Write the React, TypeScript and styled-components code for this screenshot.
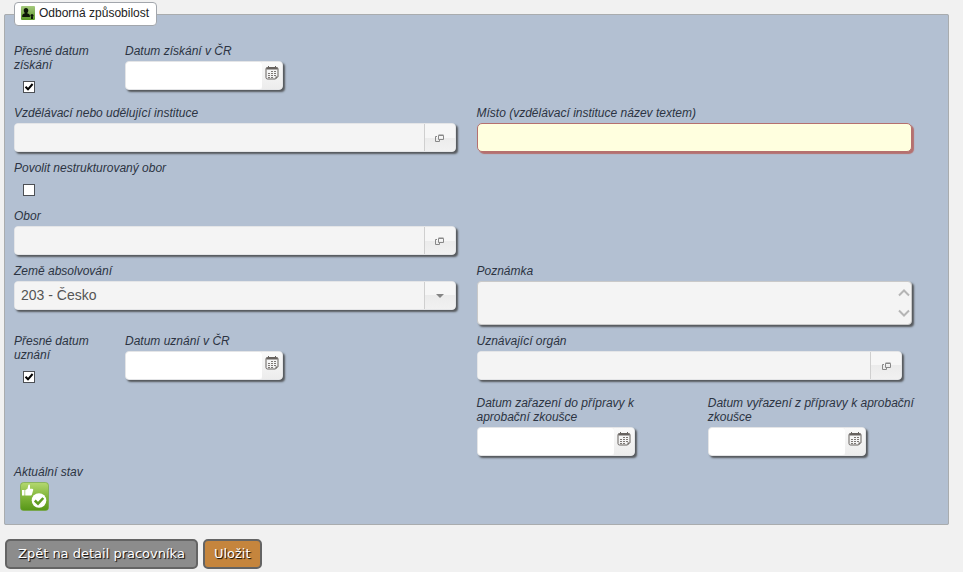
import React, { useId } from "react";
import styled, { createGlobalStyle, css } from "styled-components";

const GlobalStyle = createGlobalStyle`
  *, *::before, *::after { box-sizing: border-box; }
  body {
    margin: 0;
    background: #f1f1f1;
    font-family: "Liberation Sans", Arial, sans-serif;
    font-size: 12px;
    line-height: 14px;
    color: #2c3442;
  }
  button, input, select, textarea { font: inherit; color: inherit; }
`;

const Page = styled.form`
  padding: 2px 14px 0 4px;
`;

const Panel = styled.fieldset`
  margin: 0;
  min-width: 0;
  padding: 18px 9px 13px;
  border: 1px solid #a9acae;
  border-radius: 2px;
  background: #b3c0d2;
`;

const PanelTitle = styled.legend`
  display: flex;
  align-items: center;
  gap: 4px;
  height: 24px;
  padding: 0 7px 2px 6px;
  border: 1px solid #a2a6ac;
  border-radius: 4px;
  background: #fff;
  color: #222;
`;

const Rows = styled.div`
  display: flex;
  flex-direction: column;
  gap: 9px;
`;

const Row = styled.div`
  display: grid;
  grid-template-columns: 1fr 1fr;
`;

const Split = styled.div<{ $columns: string }>`
  display: grid;
  grid-template-columns: ${(p) => p.$columns};
`;

const Field = styled.div<{ $inset?: number }>`
  display: flex;
  flex-direction: column;
  align-items: flex-start;
  gap: 3px;
  min-width: 0;
  padding-right: ${(p) => p.$inset ?? 21}px;
`;

const DateCell = styled(Field)`
  padding-right: 20px;
`;

const Label = styled.label`
  font-style: italic;
`;

const CheckSlot = styled.div`
  display: flex;
  align-items: center;
  height: 22px;
  padding: 2px 0 0 9px;
`;

const CheckInput = styled.input`
  appearance: none;
  width: 12px;
  height: 12px;
  margin: 0;
  border: 1px solid #4c4f54;
  background: #fff;
  &:checked {
    background: #fff
      url("data:image/svg+xml,%3Csvg xmlns='http://www.w3.org/2000/svg' viewBox='0 0 10 10'%3E%3Cpath d='M1.5 4.8 4 7.3 8.6 2' fill='none' stroke='%23000' stroke-width='2'/%3E%3C/svg%3E")
      center / 10px 10px no-repeat;
  }
`;

const raised = css`
  border: 1px solid #e4e5e7;
  border-radius: 4px;
  box-shadow: 2px 2px 2px #55585c;
`;

const Combo = styled.div<{ $width?: string }>`
  ${raised}
  display: flex;
  width: ${(p) => p.$width ?? "100%"};
  height: 29px;
  overflow: hidden;
  background: #f4f4f4;
`;

const ComboInput = styled.input<{ $white?: boolean }>`
  flex: 1;
  min-width: 0;
  padding: 0 6px;
  border: 0;
  border-radius: ${(p) => (p.$white ? "3px" : "0")};
  background: ${(p) => (p.$white ? "#fff" : "#f4f4f4")};
  outline: none;
`;

const LookupButton = styled.button`
  display: flex;
  align-items: center;
  justify-content: center;
  width: 31px;
  padding: 0;
  border: 0;
  border-left: 1px solid #cfcfcf;
  background: linear-gradient(#f6f6f6 50%, #ebebeb 50%, #f1f1f1);
`;

const DateButton = styled.button`
  display: flex;
  justify-content: center;
  width: 20px;
  padding: 4px 0 0;
  border: 0;
  background: linear-gradient(#fafafa, #ececec);
`;

const SelectInput = styled.select`
  appearance: none;
  flex: 1;
  min-width: 0;
  padding: 0 6px 2px;
  border: 0;
  background: #f4f4f4;
  color: #555;
  font-size: 14px;
  line-height: 20px;
  outline: none;
`;

const RequiredInput = styled.input`
  width: 100%;
  height: 29px;
  padding: 0 6px;
  border: 1px solid #b5706f;
  border-radius: 5px;
  box-shadow: 2px 2px 1px #b5706f;
  background: #ffffdf;
  outline: none;
`;

const NoteBox = styled.div`
  ${raised}
  display: flex;
  width: 100%;
  height: 44px;
  background: #f4f4f4;
  border-color: #c9c9c9;
`;

const NoteInput = styled.textarea`
  flex: 1;
  min-width: 0;
  padding: 4px 6px;
  border: 0;
  background: transparent;
  resize: none;
  outline: none;
  scrollbar-width: none;
`;

const NoteArrows = styled.div`
  display: flex;
  flex-direction: column;
  justify-content: space-between;
  padding: 7px 1px 7px 2px;
`;

const StatusIcon = styled.div`
  display: flex;
  height: 29px;
  padding-left: 6px;
`;

const Actions = styled.div`
  display: flex;
  gap: 5px;
  padding: 14px 0 0 1px;
`;

const ActionButton = styled.button<{ $tone: string; $pad: number }>`
  height: 30px;
  padding: 0 ${(p) => p.$pad}px;
  border: 2px solid #646464;
  border-radius: 5px;
  background: ${(p) => p.$tone};
  color: #fff;
  font-family: "DejaVu Sans", Verdana, sans-serif;
  font-size: 13px;
  text-shadow: 1px 1px 1px #000;
`;

const PersonIcon = () => (
  <svg width="14" height="14" viewBox="0 0 14 14" aria-hidden="true">
    <defs>
      <linearGradient id="person-bg" x1="0" y1="0" x2="0" y2="1">
        <stop offset="0" stopColor="#a5c97d" />
        <stop offset="1" stopColor="#5c9a28" />
      </linearGradient>
    </defs>
    <rect width="14" height="14" rx="1" fill="url(#person-bg)" />
    <path
      d="M5 2c1.500 0 2.300 1 2.300 2.300 0 1-.4 1.900-.9 2.400v.8c1.400.5 2.500.9 2.500 2.200V11H1.200V9.700c0-1.300 1.100-1.700 2.400-2.200v-.8c-.5-.5-.9-1.400-.9-2.400C2.700 3 3.500 2 5 2z"
      fill="#0d1607"
    />
    <circle cx="11" cy="9.500" r="1.500" fill="#0d1607" />
    <path d="M10 11h2v2h-2z" fill="#0d1607" />
  </svg>
);

const CalendarIcon = () => (
  <svg width="14" height="14" viewBox="0 0 14 14" fill="none" stroke="#67625f" aria-hidden="true">
    <path d="M2.500 1.500h9a1.500 1.500 0 0 1 1.500 1.500v7.500l-2.500 2.500h-8A1.500 1.500 0 0 1 1 11.500V3a1.500 1.500 0 0 1 1.500-1.500z" />
    <path d="M1.500 2.500h11" strokeWidth="2" />
    <path d="M3.500 0v2M10.500 0v2" />
    <path d="M6 5.500h5M3 7.500h8M3 9.500h8M3 11.500h5" stroke="#7d7875" strokeDasharray="2 1" />
    <path d="M10.500 13v-2.500H13z" fill="#67625f" stroke="none" />
  </svg>
);

const WindowsIcon = () => (
  <svg width="9" height="8" viewBox="0 0 9 8" fill="none" stroke="#888" aria-hidden="true">
    <path d="M3.500 1.500h5v4h-5zM3.500 1h5" />
    <path d="M2 2.500H.5v5h4V6" />
  </svg>
);

const Triangle = () => (
  <svg width="8" height="4" viewBox="0 0 8 4" aria-hidden="true">
    <path d="M0 0h8L4 4z" fill="#858585" />
  </svg>
);

const Chevron = ({ d }: { d: string }) => (
  <svg width="12" height="8" viewBox="0 0 12 8" fill="none" stroke="#b5b5b5" strokeWidth="2" aria-hidden="true">
    <path d={d} />
  </svg>
);

const ThumbCheckIcon = () => (
  <svg width="29" height="29" viewBox="0 0 29 29" role="img" aria-labelledby="status-label">
    <defs>
      <linearGradient id="status-bg" x1="0" y1="0" x2="0" y2="1">
        <stop offset="0" stopColor="#b4d870" />
        <stop offset=".5" stopColor="#82b63b" />
        <stop offset="1" stopColor="#569617" />
      </linearGradient>
    </defs>
    <rect x=".5" y=".5" width="28" height="28" rx="3" fill="url(#status-bg)" stroke="#6fa333" strokeOpacity=".6" />
    <path
      d="M2 8h2.500v5.500H2zM5.200 8.200 7.500 6.800 8.300 3.200c.2-1 1.700-.7 1.700.5v3h2.200c1 0 1.200.8 1 1.400l-1.200 4.200c-.2.800-.8 1.200-1.500 1.200H5.200z"
      fill="#fff"
    />
    <circle cx="19" cy="18.500" r="7.300" fill="#fff" />
    <path d="m14.800 18.500 3.200 3.200 5.300-5.700" fill="none" stroke="#5f9c22" strokeWidth="2.500" />
  </svg>
);

function CheckField({ label, checked }: { label: string; checked?: boolean }) {
  const id = useId();
  return (
    <Field>
      <Label htmlFor={id}>{label}</Label>
      <CheckSlot>
        <CheckInput id={id} type="checkbox" defaultChecked={checked} />
      </CheckSlot>
    </Field>
  );
}

function DateField({ label }: { label: string }) {
  const id = useId();
  return (
    <DateCell>
      <Label htmlFor={id}>{label}</Label>
      <Combo $width="158px">
        <ComboInput id={id} type="text" $white />
        <DateButton type="button" aria-label={label}>
          <CalendarIcon />
        </DateButton>
      </Combo>
    </DateCell>
  );
}

function LookupField({ label, inset }: { label: string; inset?: number }) {
  const id = useId();
  return (
    <Field $inset={inset}>
      <Label htmlFor={id}>{label}</Label>
      <Combo>
        <ComboInput id={id} type="text" readOnly />
        <LookupButton type="button" aria-label={label}>
          <WindowsIcon />
        </LookupButton>
      </Combo>
    </Field>
  );
}

export default function App() {
  return (
    <>
      <GlobalStyle />
      <Page onSubmit={(e: React.FormEvent) => e.preventDefault()}>
        <Panel>
          <PanelTitle>
            <PersonIcon />
            Odborná způsobilost
          </PanelTitle>
          <Rows>
            <Row>
              <Split $columns="12fr 38fr">
                <CheckField label="Přesné datum získání" checked />
                <DateField label="Datum získání v ČR" />
              </Split>
            </Row>
            <Row>
              <LookupField label="Vzdělávací nebo udělující instituce" />
              <Field $inset={27}>
                <Label htmlFor="place">Místo (vzdělávací instituce název textem)</Label>
                <RequiredInput id="place" type="text" />
              </Field>
            </Row>
            <Row>
              <CheckField label="Povolit nestrukturovaný obor" />
            </Row>
            <Row>
              <LookupField label="Obor" />
            </Row>
            <Row>
              <Field>
                <Label htmlFor="country">Země absolvování</Label>
                <Combo>
                  <SelectInput id="country">
                    <option>203 - Česko</option>
                  </SelectInput>
                  <LookupButton as="span">
                    <Triangle />
                  </LookupButton>
                </Combo>
              </Field>
              <Field $inset={27}>
                <Label htmlFor="note">Poznámka</Label>
                <NoteBox>
                  <NoteInput id="note" />
                  <NoteArrows>
                    <Chevron d="M1 6.500 6 1.500l5 5" />
                    <Chevron d="m1 1.500 5 5 5-5" />
                  </NoteArrows>
                </NoteBox>
              </Field>
            </Row>
            <Row>
              <Split $columns="12fr 38fr">
                <CheckField label="Přesné datum uznání" checked />
                <DateField label="Datum uznání v ČR" />
              </Split>
              <LookupField label="Uznávající orgán" inset={37} />
            </Row>
            <Row>
              <div />
              <Split $columns="1fr 1fr">
                <DateField label="Datum zařazení do přípravy k aprobační zkoušce" />
                <DateField label="Datum vyřazení z přípravy k aprobační zkoušce" />
              </Split>
            </Row>
            <Row>
              <Field>
                <Label as="span" id="status-label">Aktuální stav</Label>
                <StatusIcon>
                  <ThumbCheckIcon />
                </StatusIcon>
              </Field>
            </Row>
          </Rows>
        </Panel>
        <Actions>
          <ActionButton type="button" $tone="#8c8c8c" $pad={11}>Zpět na detail pracovníka</ActionButton>
          <ActionButton type="submit" $tone="#c5853d" $pad={9}>Uložit</ActionButton>
        </Actions>
      </Page>
    </>
  );
}
